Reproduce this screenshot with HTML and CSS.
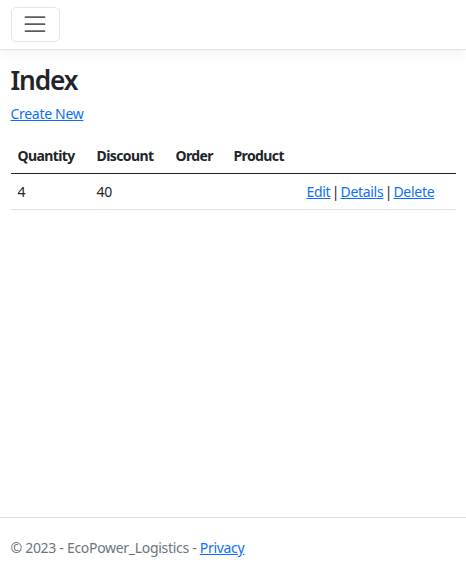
FILE: index.html
```
<!DOCTYPE html>
<html lang="en">
<head>
<meta charset="utf-8">
<title>Index - EcoPower_Logistics</title>
<link rel="stylesheet" href="styles.css">
</head>
<body>
<header>
  <nav class="navbar">
    <div class="nav-container">
      <button class="toggler" type="button" aria-label="Toggle navigation">
        <svg class="toggler-icon" viewBox="0 0 30 30" width="26" height="26" aria-hidden="true">
          <path d="M4 7h22M4 15h22M4 23h22" stroke="rgba(33,37,41,0.75)" stroke-width="2" stroke-linecap="round" stroke-miterlimit="10" fill="none"/>
        </svg>
      </button>
    </div>
  </nav>
</header>
<main class="container">
  <h1 class="title">Index</h1>
  <p class="create"><a href="#">Create New</a></p>
  <table class="table">
    <thead>
      <tr>
        <th class="c1">Quantity</th>
        <th class="c2">Discount</th>
        <th class="c3">Order</th>
        <th class="c4">Product</th>
        <th class="c5"></th>
      </tr>
    </thead>
    <tbody>
      <tr>
        <td>4</td>
        <td>40</td>
        <td></td>
        <td></td>
        <td class="actions"><a href="#">Edit</a> | <a href="#">Details</a> | <a href="#">Delete</a></td>
      </tr>
    </tbody>
  </table>
</main>
<footer class="footer">
  <div class="container">&copy; 2023 - EcoPower_Logistics - <a href="#">Privacy</a></div>
</footer>
</body>
</html>
```
FILE: styles.css
```
html {
  font-size: 14px;
}
* {
  box-sizing: border-box;
}
body {
  margin: 0;
  min-height: 100vh;
  display: flex;
  flex-direction: column;
  font-family: "Noto Sans", "Open Sans", sans-serif;
  font-size: 1rem;
  line-height: 1.5;
  letter-spacing: -0.3px;
  color: #212529;
  background: #fff;
}
a {
  color: #0d6efd;
  text-decoration: underline;
}
.navbar {
  padding: 7px 0;
  background: #fff;
  border-bottom: 1px solid #dee2e6;
  box-shadow: 0 3.5px 10.5px rgba(0, 0, 0, 0.05);
  margin-bottom: 14px;
}
.nav-container {
  padding: 0 10.5px;
  display: flex;
}
.toggler {
  padding: 3.5px 10.5px;
  background: transparent;
  border: 1px solid rgba(0, 0, 0, 0.1);
  border-radius: 5.25px;
  line-height: 1;
  display: flex;
  align-items: center;
  justify-content: center;
  width: 49px;
  height: 35px;
  cursor: pointer;
}
.toggler-icon {
  display: block;
  width: 26.25px;
  height: 26.25px;
}
.container {
  padding: 0 10.5px;
}
main.container {
  padding-bottom: 14px;
}
.title {
  font-size: 26.25px;
  font-weight: 600;
  line-height: 1.2;
  letter-spacing: -1.1px;
  margin: 1px 0 6px;
}
.create {
  margin: 0 0 14px;
}
.table {
  width: 100%;
  border-collapse: collapse;
  table-layout: fixed;
}
.table th,
.table td {
  padding: 7px;
  text-align: left;
  vertical-align: bottom;
  border-bottom: 1px solid #dee2e6;
}
.table td {
  vertical-align: top;
}
.table thead th {
  font-weight: 700;
  letter-spacing: -0.6px;
  border-bottom: 1px solid #212529;
}
.actions {
  white-space: nowrap;
  word-spacing: -2px;
}
.c1 { width: 79px; }
.c2 { width: 79px; }
.c3 { width: 58px; }
.c4 { width: 73px; }
.footer {
  margin-top: auto;
  border-top: 1px solid #dee2e6;
  line-height: 60px;
  color: #6c757d;
  white-space: nowrap;
}
```
